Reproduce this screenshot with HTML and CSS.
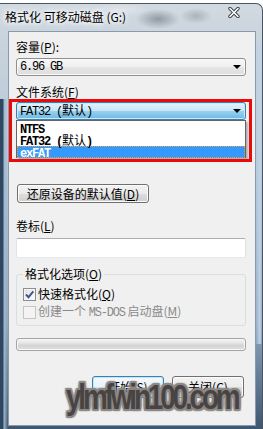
FILE: index.html
```html
<!DOCTYPE html>
<html>
<head>
<meta charset="utf-8">
<link rel="stylesheet" href="styles.css">
</head>
<body>
<div class="win">
  <div class="titlebar">
    <span class="title">格式化 可移动磁盘 (G:)</span>
    <svg class="close" width="12" height="11" viewBox="0 0 12 11">
      <path d="M2 1.5 L10 9.5 M10 1.5 L2 9.5" stroke="#3a3f46" stroke-width="3.4" stroke-linecap="round"/>
      <path d="M2 1.5 L10 9.5 M10 1.5 L2 9.5" stroke="#ffffff" stroke-width="1.6" stroke-linecap="round"/>
    </svg>
  </div>
  <div class="client">
    <div class="label l1">容量(<u>P</u>):</div>
    <div class="combo c1"><span class="m">6.96 GB</span><span class="arrow"></span></div>
    <div class="label l2">文件系统(<u>F</u>)</div>
    <div class="fswrap">
      <div class="combo c2"><span><span class="m">FAT32 (</span>默认<span class="m">)</span></span><span class="arrow"></span></div>
      <div class="list">
        <div class="item"><span class="m">NTFS</span></div>
        <div class="item"><span class="m">FAT32 (</span>默认<span class="m">)</span></div>
        <div class="item sel"><span class="m">exFAT</span></div>
      </div>
      <div class="redbox"></div>
    </div>
    <div class="btn restore">还原设备的默认值(<u>D</u>)</div>
    <div class="label l3">卷标(<u>L</u>)</div>
    <div class="input"></div>
    <fieldset class="group">
      <legend>格式化选项(<u>O</u>)</legend>
      <div class="check first">
        <span class="box on"><svg width="11" height="11" viewBox="0 0 11 11"><path d="M2 5.5 L4.5 8.2 L9.3 2.3" fill="none" stroke="#3d5494" stroke-width="1.9"/></svg></span>
        <span>快速格式化(<u>Q</u>)</span>
      </div>
      <div class="check dis">
        <span class="box"></span>
        <span>创建一个 <span class="m">MS-DOS</span> 启动盘(<u>M</u>)</span>
      </div>
    </fieldset>
    <div class="progress"></div>
    <div class="buttons">
      <div class="btn def">开始(<u>S</u>)</div>
      <div class="btn">关闭(<u>C</u>)</div>
    </div>
  </div>
  <div class="watermark">ylmfwin100.com</div>
</div>
</body>
</html>
```

FILE: styles.css
```css
* { box-sizing: border-box; }
html, body { margin: 0; padding: 0; }
body {
  width: 263px;
  height: 429px;
  overflow: hidden;
  background: #ffffff;
  font-family: "Noto Sans CJK SC", sans-serif;
  font-size: 12px;
  color: #000;
}
u { text-decoration: underline; text-underline-offset: 1px; }
.m {
  font-family: "Liberation Mono", "Courier New", monospace;
  letter-spacing: -1.2px;
}
.list .m { font-weight: bold; }

.win {
  position: relative;
  margin-top: 3px;
  height: 426px;
  border-top: 1px solid #4a5563;
  border-right: 1px solid #4a5563;
  border-top-right-radius: 7px;
  padding: 0 6px 3px 8px;
  display: flex;
  flex-direction: column;
  background:
    radial-gradient(ellipse 22px 10px at 158px 15px, rgba(70,80,92,.45), transparent),
    radial-gradient(ellipse 16px 8px at 196px 12px, rgba(95,115,105,.35), transparent),
    radial-gradient(ellipse 30px 6px at 120px 6px, rgba(255,255,255,.35), transparent),
    linear-gradient(90deg, #2f4760 0, #2f4760 3px, #9fb6cc 4px, transparent 8px) 0 95px / 8px 340px no-repeat,
    linear-gradient(270deg, transparent 0, #c0d3e6 2px, transparent 7px) 100% 40px / 7px 300px no-repeat,
    linear-gradient(180deg, #d2dae1 0%, #c6d1dc 12%, #b4c6d8 40%, #8ea6bf 75%, #3f5670 100%);
}

.titlebar {
  height: 27px;
  margin-left: -3px;
  display: flex;
  justify-content: space-between;
  align-items: flex-start;
}
.title {
  padding-top: 5px;
  line-height: 16px;
  color: #000;
  text-shadow: 0 0 4px #fff, 0 0 6px #fff, 0 0 8px rgba(255,255,255,.9);
}
.close { margin-top: 3px; margin-right: 16px; }

.client {
  flex: 1;
  border: 1px solid #8a9aab;
  background: #f0f0f0;
  padding: 0 9px 0 7px;
  display: flex;
  flex-direction: column;
}

.label { line-height: 16px; height: 16px; }
.l1 { margin-top: 7px; }
.l2 { margin-top: 8px; }
.l3 { margin-top: 15px; }

.combo {
  height: 18px;
  border: 1px solid #8e8f8f;
  border-radius: 3px;
  display: flex;
  align-items: center;
  justify-content: space-between;
  padding: 0 4px 0 3px;
  line-height: 16px;
}
.c1 {
  margin-top: 3px;
  background: linear-gradient(180deg, #f6f6f6 0%, #efefef 50%, #e5e5e5 51%, #dedede 100%);
  box-shadow: inset 0 0 0 1px #fbfbfb;
}
.c2 {
  border-color: #3c7fb1;
  background: linear-gradient(180deg, #e5f4fc 0%, #c4e5f6 50%, #98d1ef 51%, #6db9e3 100%);
  box-shadow: inset 0 0 0 1px #cbe9f8;
}
.arrow {
  width: 0;
  height: 0;
  border-left: 4px solid transparent;
  border-right: 4px solid transparent;
  border-top: 4px solid #000;
}

.fswrap { position: relative; margin-top: 2px; }
.list {
  background: #fff;
  border: 1px solid #646464;
  padding-top: 1px;
  height: 38px;
  box-shadow: 2px 2px 2px rgba(0,0,0,.28);
}
.item { height: 12px; line-height: 12px; padding-left: 3px; }
.item.sel {
  background: #3399ff;
  color: #fff;
  outline: 1px dotted #e7a03a;
  outline-offset: -1px;
}
.redbox {
  position: absolute;
  left: -7px;
  top: -3px;
  width: 243px;
  height: 63px;
  border: 3px solid #ea0a0a;
}

.btn {
  height: 19px;
  border: 1px solid #707070;
  border-radius: 3px;
  background: linear-gradient(180deg, #f2f2f2 0%, #ebebeb 50%, #dddddd 51%, #cfcfcf 100%);
  box-shadow: inset 0 0 0 1px #fcfcfc;
  display: flex;
  align-items: center;
  justify-content: center;
  line-height: 16px;
}
.restore { margin-top: 26px; margin-left: 1px; width: 132px; }

.input {
  margin-top: 4px;
  height: 20px;
  background: #fff;
  border: 1px solid;
  border-color: #abadb3 #dbdfe6 #e3e9ef #e2e3ea;
  border-radius: 2px;
}

.group {
  margin: 8px 0 0 0;
  padding: 0 6px 5px 6px;
  border: 1px solid #d5dfe5;
  border-radius: 3px;
  min-inline-size: 0;
}
.group legend {
  padding: 0 2px;
  line-height: 16px;
}
.check {
  display: flex;
  align-items: center;
  height: 16px;
  line-height: 16px;
  gap: 2px;
}
.check.first { margin-top: 4px; }
.check.dis { margin-top: 2px; color: #8a8a8a; }
.box {
  width: 13px;
  height: 13px;
  border: 1px solid #8e8f8f;
  background: linear-gradient(135deg, #dcdcdc 0%, #f4f4f4 60%, #ffffff 100%);
  box-shadow: inset 0 0 0 1px #f4f4f4;
  display: flex;
  align-items: center;
  justify-content: center;
}
.dis .box { border-color: #c5c5c5; background: #f4f4f4; box-shadow: none; }

.progress {
  margin-top: 12px;
  height: 13px;
  border: 1px solid #a5a5a5;
  border-radius: 3px;
  background: linear-gradient(180deg, #f4f4f4 0%, #e6e6e6 35%, #d3d3d3 60%, #e2e2e2 100%);
  box-shadow: inset 0 0 0 1px #f7f7f7;
}

.buttons {
  margin-top: 25px;
  display: flex;
  justify-content: flex-end;
  gap: 8px;
  padding-right: 2px;
}
.buttons .btn { width: 72px; height: 22px; }
.btn.def {
  border-color: #3c7fb1;
  box-shadow: inset 0 0 0 1px #c0e6f8;
  background: linear-gradient(180deg, #f3f8fb 0%, #eaf3f8 50%, #dbe8f0 51%, #cfdde6 100%);
}

.watermark {
  position: absolute;
  left: 66px;
  top: 375px;
  font-family: "Liberation Sans", Arial, sans-serif;
  font-size: 35px;
  font-weight: bold;
  line-height: 35px;
  letter-spacing: -4px;
  color: #474443;
  transform: scaleX(0.8);
  transform-origin: 0 0;
  white-space: nowrap;
  text-shadow:
    2px 0 1px #8d8886, -2px 0 1px #8d8886, 0 2px 1px #8d8886, 0 -2px 1px #8d8886,
    2px 2px 1px #8d8886, -2px -2px 1px #8d8886, 2px -2px 1px #8d8886, -2px 2px 1px #8d8886,
    0 0 4px #a8a4a2;
}
```
